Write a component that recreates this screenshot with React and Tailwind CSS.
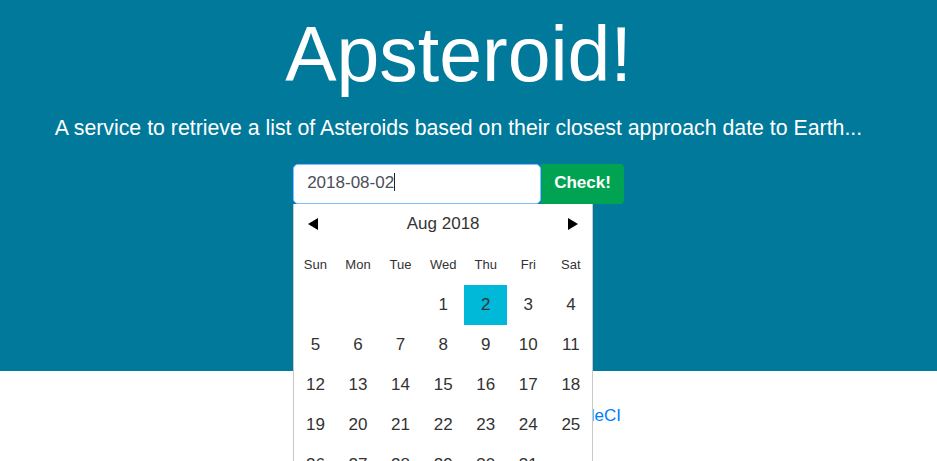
const days = ['Sun', 'Mon', 'Tue', 'Wed', 'Thu', 'Fri', 'Sat'];

// August 2018 starts on a Wednesday
function buildCells() {
    const cells = [null, null, null];
    for (let d = 1; d <= 31; d++) cells.push(d);
    return cells;
}

function Calendar() {
    const cells = buildCells();
    return (
        <div className="absolute left-0 top-[40px] w-[300px] bg-white border border-[#c8c8c8] border-t-0 z-10 text-[#333]">
            <div className="flex items-center justify-between h-[40px] px-[14px]">
                <svg width="10" height="12" viewBox="0 0 10 12"><polygon points="10,0 10,12 0,6" fill="#000" /></svg>
                <span className="text-[17px]">Aug 2018</span>
                <svg width="10" height="12" viewBox="0 0 10 12"><polygon points="0,0 0,12 10,6" fill="#000" /></svg>
            </div>
            <div className="grid grid-cols-7 h-[41px] items-center">
                {days.map((d) => (
                    <div key={d} className="text-center text-[13px] text-[#333]">{d}</div>
                ))}
            </div>
            <div className="grid grid-cols-7">
                {cells.map((c, i) => (
                    <div
                        key={i}
                        className={
                            'h-[40px] flex items-center justify-center text-[17px] ' +
                            (c === 2 ? 'bg-[#00b8d8]' : '')
                        }
                    >
                        {c}
                    </div>
                ))}
            </div>
        </div>
    );
}

export default function App() {
    return (
        <div className="w-[937px] h-[461px] overflow-hidden bg-white font-['Liberation_Sans',Arial,sans-serif]">
            <div className="bg-[#01799a] h-[371px] text-white">
                <div className="w-[917px] flex flex-col items-center">
                    <h1 className="text-[77px] leading-none mt-[16px]">Apsteroid!</h1>
                    <p className="text-[21.3px] mt-[20px]">
                        A service to retrieve a list of Asteroids based on their closest approach date to Earth...
                    </p>
                    <div className="flex mt-[19px]">
                        <div className="relative">
                            <div className="w-[248px] h-[40px] bg-white rounded-[5px] border border-[#80bdff] shadow-[0_0_0_1px_rgba(0,123,255,0.35)] flex items-center px-[13px] pb-[3px] text-[17px] text-[#495057]">
                                2018-08-02<span className="inline-block w-px h-[18px] bg-[#222]"></span>
                            </div>
                            <Calendar />
                        </div>
                        <button className="h-[40px] px-[13px] pb-[3px] bg-[#00a352] rounded-r-[4px] text-white font-bold text-[17px]">
                            Check!
                        </button>
                    </div>
                </div>
            </div>
            <div className="w-[621px] flex justify-end pt-[32px]">
                <a className="text-[#007bff] text-[17px]">Continuously deployed with CircleCI</a>
            </div>
        </div>
    );
}
